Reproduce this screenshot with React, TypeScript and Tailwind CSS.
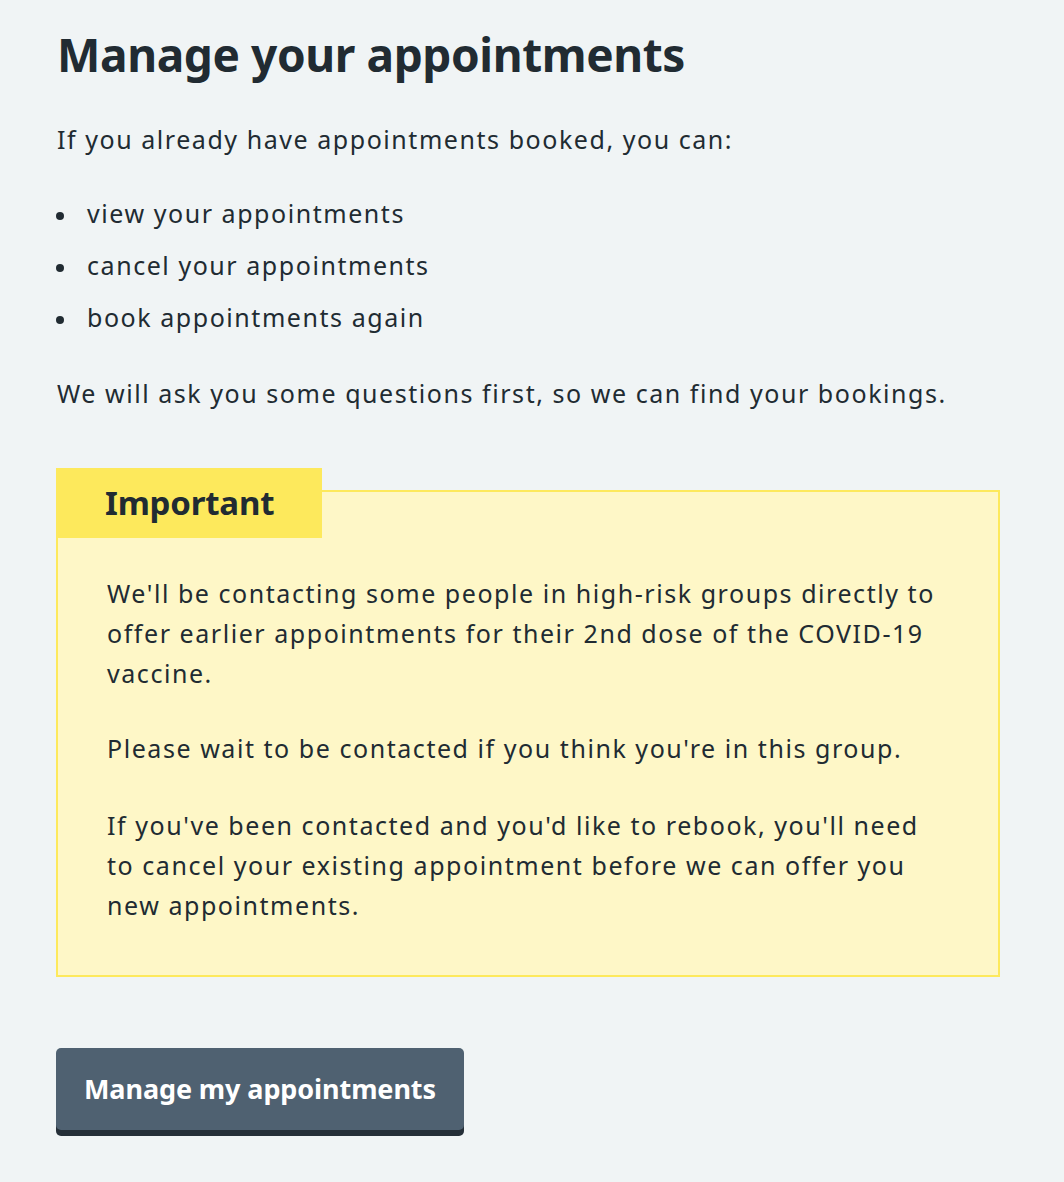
import React from "react";

function Bullet({ children }: { children: React.ReactNode }) {
  return (
    <li className="flex">
      <span className="w-[30px] shrink-0">
        <span className="-ml-[1px] mt-[19px] block h-[8px] w-[8px] rounded-full bg-[#212b32]" />
      </span>
      <span>{children}</span>
    </li>
  );
}

export default function App() {
  const font = { fontFamily: '"Noto Sans", "Open Sans", Arial, sans-serif' };
  return (
    <div className="min-h-[1182px] bg-[#f0f4f5] text-[#212b32]" style={font}>
      <div className="px-[57px] pt-[26px]">
        <h1 className="text-[46px] font-bold leading-[56px] tracking-[-0.4px]">
          Manage your appointments
        </h1>
        <div className="text-[25px] leading-[40px] tracking-[1.55px]">
          <p className="mt-[37px]">If you already have appointments booked, you can:</p>
          <ul className="mt-[34px] flex flex-col gap-[12px]">
            <Bullet>view your appointments</Bullet>
            <Bullet>cancel your appointments</Bullet>
            <Bullet>book appointments again</Bullet>
          </ul>
          <p className="mt-[36px]">
            We will ask you some questions first, so we can find your bookings.
          </p>
        </div>

        <div className="-ml-[1px] mt-[55px] w-[944px]">
          <div className="relative z-10 inline-flex h-[70px] w-[266px] items-center bg-[#fde95c] pl-[49px]">
            <h2 className="text-[33px] font-bold leading-[40px] tracking-[-0.2px]">Important</h2>
          </div>
          <div className="-mt-[48px] border-2 border-[#fde95c] bg-[#fef7c7] px-[49px] pb-[50px] pt-[81px] text-[25px] leading-[40px] tracking-[1.55px]">
            <p>
              We'll be contacting some people in high-risk groups directly to offer earlier appointments for their 2nd dose of the COVID-19 vaccine.
            </p>
            <p className="mt-[35px]">
              Please wait to be contacted if you think you're in this group.
            </p>
            <p className="mt-[37px]">
              If you've been contacted and you'd like to rebook, you'll need to cancel your existing appointment before we can offer you new appointments.
            </p>
          </div>
        </div>

        <button className="-ml-[1px] mt-[71px] flex h-[82px] items-center rounded-[5px] bg-[#4f6171] px-[28px] text-[27px] font-bold tracking-[-0.1px] text-white shadow-[0_6px_0_#252f38]">
          Manage my appointments
        </button>
      </div>
    </div>
  );
}
